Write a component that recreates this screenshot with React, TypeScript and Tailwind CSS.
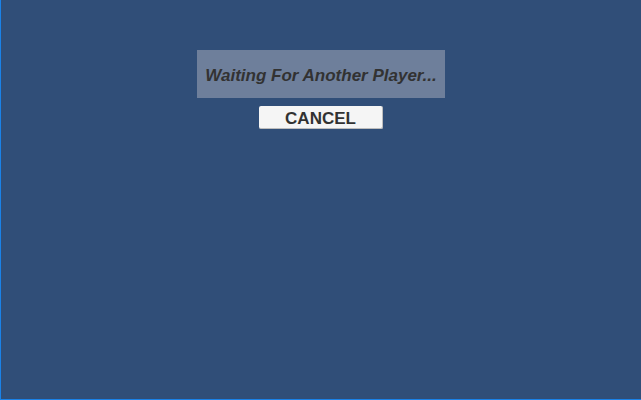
export default function App() {
  return (
    <div className="w-[641px] h-[400px] bg-[#304e78] border-l border-b border-[#1a82e8] flex flex-col items-center" style={{ fontFamily: '"Liberation Sans", Arial, sans-serif' }}>
      <div className="mt-[50px] w-[248px] h-[48px] bg-[#6e7f9b] flex items-center justify-center">
        <span className="text-[17px] font-bold italic text-[#323232] leading-none pt-[2px]">Waiting For Another Player...</span>
      </div>
      <button className="mt-[8px] w-[124px] h-[23px] bg-[#f5f5f5] rounded-[2px] border-r border-b border-[#bdbdbd] flex items-center justify-center text-[17px] font-bold text-[#323232] leading-none pt-[2px]">
        CANCEL
      </button>
    </div>
  );
}
